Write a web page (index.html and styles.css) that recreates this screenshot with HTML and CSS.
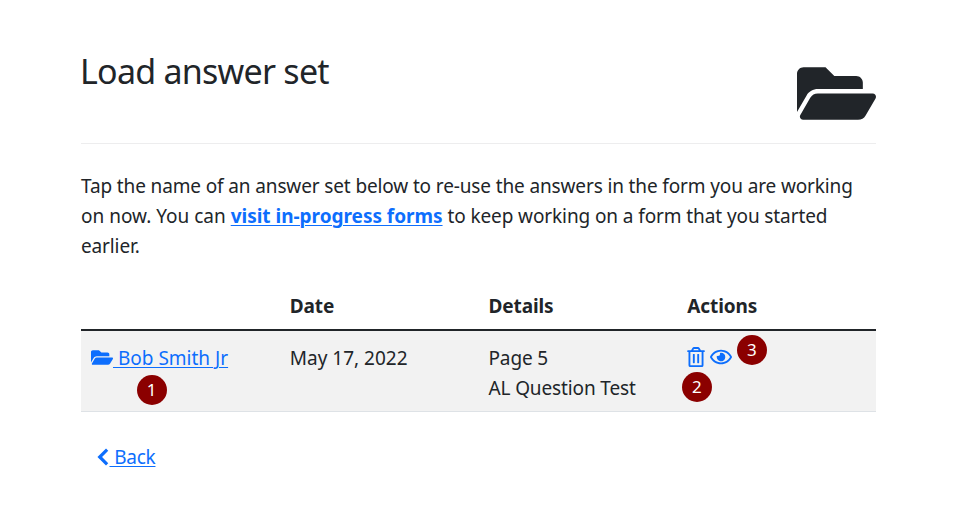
FILE: index.html
```html
<!DOCTYPE html>
<html lang="en">
<head>
<meta charset="utf-8">
<title>Load answer set</title>
<link rel="stylesheet" href="styles.css">
</head>
<body>
<main class="page">
  <header class="page-header">
    <h1><span>Load answer set</span></h1>
    <svg class="header-icon" viewBox="0 64 576 384" aria-hidden="true"><path d="M572.694 292.093L500.27 416.248A63.997 63.997 0 0 1 444.989 448H45.025c-18.523 0-30.064-20.093-20.731-36.093l72.424-124.155A64 64 0 0 1 152 256h399.964c18.523 0 30.064 20.093 20.73 36.093zM152 224h328v-48c0-26.51-21.49-48-48-48H272l-64-64H48C21.49 64 0 85.49 0 112v278.046l69.077-118.418C86.214 242.25 117.989 224 152 224z"/></svg>
  </header>
  <p class="intro"><span class="line-a">Tap the name of an answer set below to re-use the answers in the form you are working</span><br><span class="line-b">on now. You can </span><a class="strong" href="#">visit in-progress forms</a><span class="line-c"> to keep working on a form that you started</span><br><span>earlier.</span></p>
  <table class="answers">
    <thead>
      <tr><th></th><th>Date</th><th>Details</th><th>Actions</th></tr>
    </thead>
    <tbody>
      <tr>
        <td class="name-cell"><a href="#"><svg class="icon-folder" viewBox="0 64 576 384" aria-hidden="true"><path d="M572.694 292.093L500.27 416.248A63.997 63.997 0 0 1 444.989 448H45.025c-18.523 0-30.064-20.093-20.731-36.093l72.424-124.155A64 64 0 0 1 152 256h399.964c18.523 0 30.064 20.093 20.73 36.093zM152 224h328v-48c0-26.51-21.49-48-48-48H272l-64-64H48C21.49 64 0 85.49 0 112v278.046l69.077-118.418C86.214 242.25 117.989 224 152 224z"/></svg><span class="name">&nbsp;Bob Smith Jr</span></a><span class="marker marker-1">1</span></td>
        <td><span class="date">May 17, 2022</span></td>
        <td><span class="page-no">Page 5</span><br><span class="test">AL Question Test</span></td>
        <td class="actions"><a href="#" aria-label="Delete"><svg class="icon-trash" viewBox="0 0 448 512"><path d="M268 416h24a12 12 0 0 0 12-12V188a12 12 0 0 0-12-12h-24a12 12 0 0 0-12 12v216a12 12 0 0 0 12 12zM432 80h-82.41l-34-56.7A48 48 0 0 0 274.41 0H173.59a48 48 0 0 0-41.16 23.3L98.41 80H16A16 16 0 0 0 0 96v16a16 16 0 0 0 16 16h16v336a48 48 0 0 0 48 48h288a48 48 0 0 0 48-48V128h16a16 16 0 0 0 16-16V96a16 16 0 0 0-16-16zM171.84 50.91A6 6 0 0 1 177 48h94a6 6 0 0 1 5.15 2.91L293.61 80H154.39zM368 464H80V128h288zm-212-48h24a12 12 0 0 0 12-12V188a12 12 0 0 0-12-12h-24a12 12 0 0 0-12 12v216a12 12 0 0 0 12 12z"/></svg></a><a href="#" aria-label="View"><svg class="icon-eye" viewBox="0 0 576 512"><path d="M288 144a110.94 110.94 0 0 0-31.24 5 55.4 55.4 0 0 1 7.24 27 56 56 0 0 1-56 56 55.4 55.4 0 0 1-27-7.24A111.71 111.71 0 1 0 288 144zm284.52 97.4C518.29 135.59 410.93 64 288 64S57.68 135.64 3.48 241.41a32.35 32.35 0 0 0 0 29.19C57.71 376.41 165.07 448 288 448s230.32-71.64 284.52-177.41a32.35 32.35 0 0 0 0-29.19zM288 400c-98.65 0-189.09-55-237.93-144C98.91 167 189.34 112 288 112s189.09 55 237.93 144C477.1 345 386.66 400 288 400z"/></svg></a><span class="marker marker-2">2</span><span class="marker marker-3">3</span></td>
      </tr>
    </tbody>
  </table>
  <a class="back" href="#"><svg class="icon-back" viewBox="0 0 11 17" aria-hidden="true"><path d="M9.4 1.6L2.4 8.5L9.4 15.4"/></svg><span>&nbsp;Back</span></a>
</main>
</body>
</html>
```
FILE: styles.css
```css
* { box-sizing: border-box; }
body {
  margin: 0;
  background: #fff;
  color: #212529;
  font: 19px/30px "Noto Sans", sans-serif;
  letter-spacing: -0.13px;
}
a { color: #0d6efd; text-decoration-thickness: 1px; text-underline-offset: 2px; }
svg { fill: currentColor; }
.page { width: 795px; margin-left: 81px; padding-top: 50px; }
.page-header {
  display: flex;
  justify-content: space-between;
  height: 94px;
  border-bottom: 1px solid #ededee;
}
h1 { margin: -1px 0 0 -1px; font-size: 34px; line-height: 44px; font-weight: 400; letter-spacing: -0.75px; }
.header-icon { width: 79px; height: 53px; margin-top: 17px; }
.intro { margin: 27px 0 20px; white-space: nowrap; }
.line-b { letter-spacing: 0; }
.strong { font-weight: 700; letter-spacing: -0.02px; }
.line-c { letter-spacing: -0.1px; }
.name, .date { letter-spacing: 0; }
.answers { width: 100%; table-layout: fixed; border-collapse: separate; border-spacing: 0; }
th { height: 50px; padding: 10px 10px 8px; text-align: left; vertical-align: top; border-bottom: 2px solid #212529; letter-spacing: -0.1px; }
td { position: relative; height: 81px; padding: 12px 10px 8px; vertical-align: top; background: #f2f2f2; border-bottom: 1px solid #dee2e6; white-space: nowrap; }
.name-cell a { display: inline-flex; align-items: flex-start; }
.icon-folder { width: 22px; height: 15px; margin-top: 7px; }
.actions a { display: inline-block; vertical-align: top; }
.icon-trash { display: block; width: 18px; height: 20px; margin: 4px 5px 0 0; }
.icon-eye { display: block; width: 22px; height: 20px; margin-top: 4px; }
.marker {
  position: absolute;
  width: 30px;
  height: 30px;
  border-radius: 50%;
  background: #8b0000;
  color: #fff;
  font: 17px/29px "Noto Sans", sans-serif;
  letter-spacing: 0;
  text-align: center;
}
.marker-1 { left: 55.5px; top: 43.5px; }
.marker-2 { left: 4.5px; top: 40.5px; }
.marker-3 { left: 59.5px; top: 3.5px; }
.back { display: inline-flex; margin: 30px 0 0 16px; letter-spacing: -0.25px; }
.icon-back { width: 12px; height: 18px; margin: 6px 0.5px 0 0; fill: none; stroke: currentColor; stroke-width: 3; }
```
